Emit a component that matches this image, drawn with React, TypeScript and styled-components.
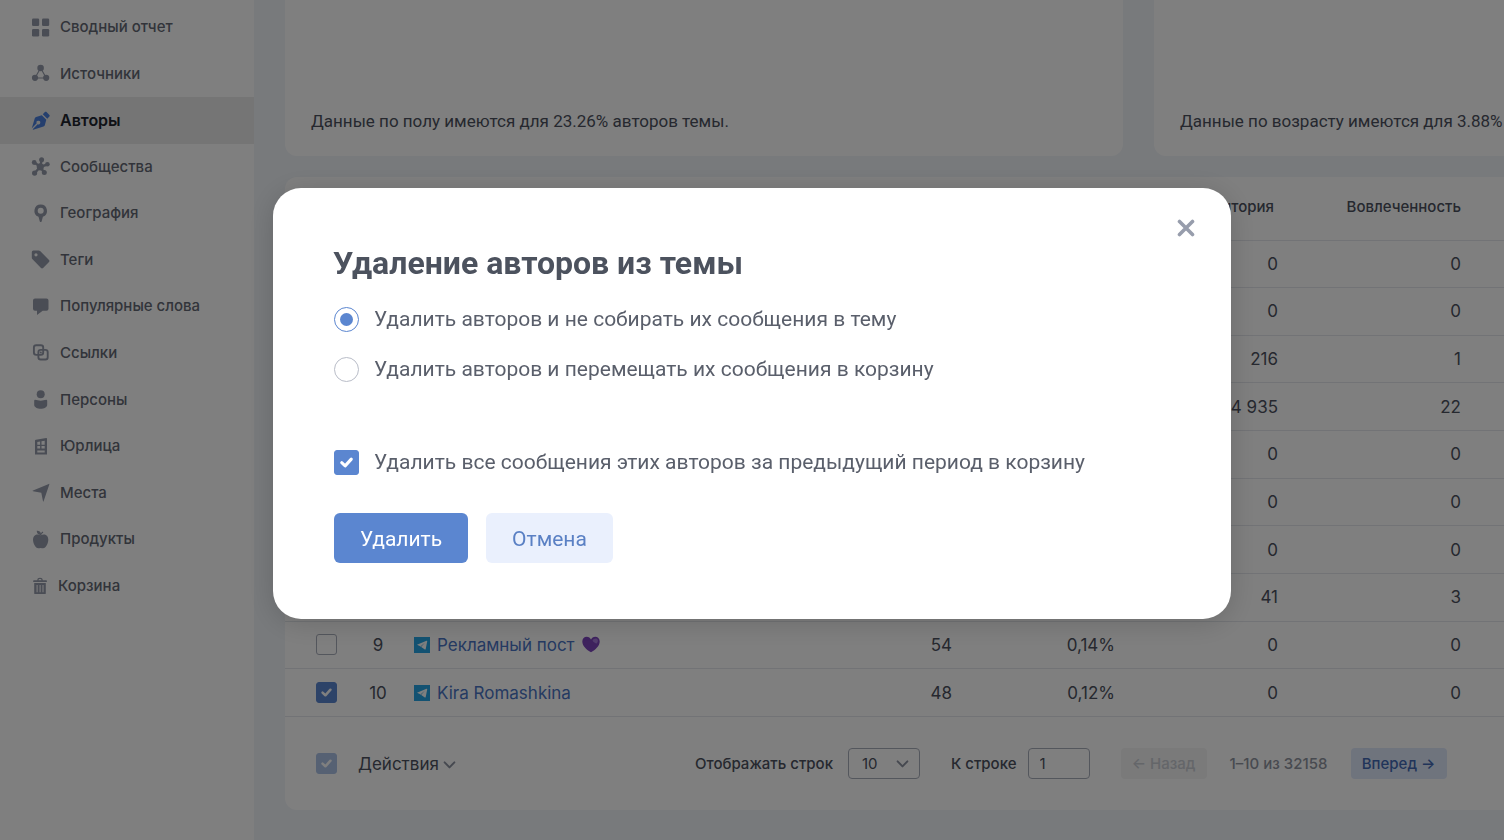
import React, { useState } from 'react';
import styled, { createGlobalStyle, css } from 'styled-components';

const GlobalStyle = createGlobalStyle`
  *, *::before, *::after { box-sizing: border-box; }
  body {
    margin: 0;
    height: 100vh;
    overflow: hidden;
    background: #f1f4f9;
    color: #4c515e;
    font-family: Inter, "Noto Sans", sans-serif;
    font-size: 17px;
    line-height: 24px;
  }
  button, input, select { font: inherit; color: inherit; }
`;

const Page = styled.div`
  display: flex;
  height: 100vh;
  overflow: hidden;
`;

/* ---------- sidebar ---------- */

const Sidebar = styled.aside`
  flex: 0 0 254px;
  padding-top: 4px;
  background: #fff;
`;

const Menu = styled.nav`
  display: flex;
  flex-direction: column;
  height: 605px;
`;

const MenuLink = styled.a<{ $active?: boolean; $tight?: boolean }>`
  flex: 1;
  display: flex;
  align-items: center;
  gap: ${p => (p.$tight ? 8 : 10)}px;
  padding-left: 31px;
  color: ${p => (p.$active ? '#20242e' : '#646975')};
  background: ${p => (p.$active ? '#eaeaea' : 'transparent')};
  font-size: ${p => (p.$active ? 16 : 15)}px;
  font-weight: ${p => (p.$active ? 600 : 500)};
  text-decoration: none;

  svg {
    flex: none;
    width: 19px;
    height: 19px;
    color: ${p => (p.$active ? '#4a7fdc' : '#959baa')};
  }
`;

/* ---------- content ---------- */

const Content = styled.main`
  flex: 1;
  min-width: 0;
  overflow: hidden;
  padding-left: 31px;
`;

const Board = styled.div`
  display: grid;
  grid-template-columns: repeat(2, minmax(838px, 1fr));
  column-gap: 31px;
  row-gap: 21px;
`;

const ChartCard = styled.section`
  display: flex;
  align-items: flex-end;
  height: 156px;
  padding: 0 26px 23px;
  background: #fff;
  border-radius: 0 0 12px 12px;
  font-family: Roboto, "Noto Sans", sans-serif;
  white-space: nowrap;

  p { margin: 0; }
`;

const TableCard = styled.section`
  grid-column: 1 / -1;
  background: #fff;
  border-radius: 12px;
`;

const Table = styled.table`
  width: 100%;
  height: 540px;
  table-layout: fixed;
  border-collapse: collapse;

  thead tr { height: 63px; }
  tr { border-bottom: 1px solid #e4e7ec; }
`;

const Col = styled.col<{ $width?: number }>`
  width: ${p => (p.$width ? `${p.$width}px` : 'auto')};
`;

const HeadCell = styled.th<{ $inset?: number }>`
  padding: 0 ${p => p.$inset ?? 0}px 3px 0;
  font-size: 15px;
  font-weight: 500;
  text-align: right;
`;

const Cell = styled.td<{ $align?: 'left' | 'center' | 'right' }>`
  padding: 0;
  text-align: ${p => p.$align ?? 'right'};
`;

const CheckCell = styled(Cell)`
  padding-left: 31px;
`;

const AuthorLink = styled.a`
  display: inline-flex;
  align-items: center;
  gap: 7px;
  color: #4a74c4;
  text-decoration: none;
  white-space: nowrap;
`;

const tick = `url("data:image/svg+xml,%3Csvg xmlns='http://www.w3.org/2000/svg' viewBox='0 0 24 24'%3E%3Cpath d='M7 12.2l3.6 3.3 6.4-7' fill='none' stroke='white' stroke-width='3.2' stroke-linecap='round' stroke-linejoin='round'/%3E%3C/svg%3E")`;

const Checkbox = styled.input.attrs({ type: 'checkbox' })<{ $size?: number }>`
  appearance: none;
  display: block;
  flex: none;
  width: ${p => p.$size ?? 21}px;
  height: ${p => p.$size ?? 21}px;
  margin: 0;
  background: #fff;
  border: 1px solid #a9aebb;
  border-radius: 3px;

  &:checked {
    background: #5b86d0 ${tick} center / 100% no-repeat;
    border-color: #5b86d0;
  }
  &:disabled { opacity: 0.5; }
`;

const Footer = styled.footer`
  display: flex;
  align-items: center;
  height: 93px;
  padding-left: 31px;
  font-size: 15px;
  font-weight: 500;
`;

const ActionsButton = styled.button`
  display: flex;
  align-items: center;
  gap: 4px;
  width: 337px;
  margin-left: 21px;
  padding: 0;
  background: none;
  border: 0;
  font-size: 17px;
  font-weight: 400;

  svg { color: #8c92a0; margin-top: 3px; }
`;

const field = css`
  height: 31px;
  background: #fff;
  border: 1px solid #a9aebb;
  border-radius: 4px;
  font-weight: 400;
`;

const Field = styled.label<{ $gap: number }>`
  display: flex;
  align-items: center;
  gap: ${p => p.$gap}px;
  margin-right: 31px;
  white-space: nowrap;
`;

const SelectBox = styled.span`
  display: grid;
  align-items: center;

  > * { grid-area: 1 / 1; }
  svg { justify-self: end; margin-right: 11px; color: #8c92a0; pointer-events: none; }
`;

const RowSelect = styled.select`
  ${field}
  appearance: none;
  width: 72px;
  padding: 0 13px;
`;

const RowInput = styled.input`
  ${field}
  width: 62px;
  padding: 0 11px;
`;

const PageButton = styled.button<{ $width: number }>`
  width: ${p => p.$width}px;
  height: 31px;
  padding: 0;
  border: 0;
  border-radius: 4px;
  background: #dfe8fb;
  color: #4269b4;
  white-space: nowrap;

  &:disabled { background: #f4f4f5; color: #c9ccd3; }
`;

const Range = styled.span`
  width: 144px;
  color: #9095a1;
  text-align: center;
`;

/* ---------- dialog ---------- */

const Overlay = styled.div`
  position: fixed;
  inset: 0;
  display: flex;
  align-items: center;
  justify-content: center;
  padding-bottom: 33px;
  background: rgba(0, 0, 0, 0.5);
`;

const Dialog = styled.form`
  position: relative;
  width: 958px;
  max-width: 100%;
  padding: 50px 60px 56px;
  background: #fff;
  border-radius: 28px;
  box-shadow: 0 4px 28px rgba(0, 0, 0, 0.16);
  color: #5a5f6b;
  font-family: Roboto, "Noto Sans", sans-serif;
  font-size: 21px;
  line-height: 26px;
`;

const CloseButton = styled.button`
  position: absolute;
  top: 28px;
  right: 33px;
  display: grid;
  place-items: center;
  width: 24px;
  height: 24px;
  padding: 0;
  background: none;
  border: 0;
  color: #979dac;
`;

const Title = styled.h2`
  margin: 0 0 18px;
  color: #4c525e;
  font-size: 32px;
  font-weight: 700;
  line-height: 50px;
`;

const Options = styled.div`
  display: flex;
  flex-direction: column;
  gap: 24px;
  margin-bottom: 67px;
`;

const Option = styled.label`
  display: flex;
  align-items: center;
  gap: 15px;
  padding-left: 1px;
  white-space: nowrap;
`;

const Radio = styled.input.attrs({ type: 'radio' })`
  appearance: none;
  display: grid;
  place-items: center;
  flex: none;
  width: 25px;
  height: 25px;
  margin: 0;
  border: 1px solid #b9bdc8;
  border-radius: 50%;

  &:checked { border-color: #5b86d0; }
  &:checked::before {
    content: '';
    width: 13px;
    height: 13px;
    border-radius: 50%;
    background: #5b86d0;
  }
`;

const Buttons = styled.div`
  display: flex;
  gap: 18px;
  margin-top: 38px;
  padding-left: 1px;
`;

const DialogButton = styled.button<{ $primary?: boolean }>`
  height: 50px;
  width: ${p => (p.$primary ? 134 : 127)}px;
  padding: 2px 0 0;
  border: 0;
  border-radius: 6px;
  background: ${p => (p.$primary ? '#5b86d0' : '#eaf0fd')};
  color: ${p => (p.$primary ? '#fff' : '#5a80c4')};
`;

/* ---------- icons ---------- */

const Svg = ({ children }: { children: React.ReactNode }) => (
  <svg viewBox="0 0 19 19" fill="currentColor" aria-hidden="true">{children}</svg>
);

const icons: Record<string, React.ReactNode> = {
  grid: (
    <Svg>
      <rect x="1" y="0.5" width="7.2" height="7.6" rx="1.3" /><rect x="11" y="0.5" width="7.2" height="7.6" rx="1.3" />
      <rect x="1" y="11" width="7.2" height="7.6" rx="1.3" /><rect x="11" y="11" width="7.2" height="7.6" rx="1.3" />
    </Svg>
  ),
  sources: (
    <Svg>
      <path d="M9.6 4L4 14h11.2z" fill="none" stroke="currentColor" strokeWidth="1.1" />
      <circle cx="9.6" cy="4" r="3.3" /><circle cx="4" cy="13.8" r="3.1" /><circle cx="15.2" cy="13.8" r="3.1" />
    </Svg>
  ),
  pen: (
    <Svg>
      <path d="M11.8 3.200l2.100-2.100c.5-.5 1.100-.5 1.600 0l2.900 2.900c.5.5.5 1.100 0 1.600l-2.100 2.100z" />
      <path fillRule="evenodd" d="M10.800 4.200l4.500 4.500-1.500 5.600c-.2.700-.600 1.100-1.300 1.300L2.200 18.800l-.500-.500 5-5a1.900 1.900 0 1 0-1-1l-4.900 4.900L3.800 7.200c.2-.700.600-1.100 1.300-1.300z" />
    </Svg>
  ),
  hub: (
    <Svg>
      <g fill="none" stroke="currentColor" strokeWidth="2.400">
        <path d="M9.300 9.800L10.600 3M9.300 9.800l7-2.300M9.300 9.800l3.800 5.700M9.300 9.800l-5.300 6M9.300 9.800L3.300 5.600" />
      </g>
      <circle cx="9.300" cy="9.800" r="3.600" />
      <circle cx="10.600" cy="2.700" r="2.500" /><circle cx="16.400" cy="7.300" r="2.300" /><circle cx="13.300" cy="15.600" r="2.500" />
      <circle cx="3.600" cy="16.100" r="2.600" /><circle cx="3.200" cy="5.500" r="2.400" />
    </Svg>
  ),
  pin: (
    <Svg>
      <path fillRule="evenodd" d="M9.700.500a6.300 6.300 0 0 0-2.200 12.200l1.300 4.700c.3.900 1.500.900 1.800 0l1.300-4.700A6.300 6.300 0 0 0 9.700.500zm0 3.300a3 3 0 1 1 0 6 3 3 0 0 1 0-6z" />
    </Svg>
  ),
  tag: (
    <Svg>
      <path fillRule="evenodd" d="M2.300.500h5.400c.5 0 1 .2 1.400.500l8.900 8.900c.600.600.600 1.500 0 2.100l-5.900 6c-.600.600-1.500.600-2.100 0L1.300 9.100A2 2 0 0 1 .800 7.700V2A1.500 1.500 0 0 1 2.300.500zM5 3.200a1.600 1.600 0 1 0 0 3.200 1.600 1.600 0 0 0 0-3.200z" />
    </Svg>
  ),
  bubble: (
    <Svg>
      <path d="M4 1.500h11.500a2 2 0 0 1 2 2v8.300a2 2 0 0 1-2 2h-3.800L6 18v-4.200H4a2 2 0 0 1-2-2V3.500a2 2 0 0 1 2-2z" />
    </Svg>
  ),
  links: (
    <Svg>
      <g fill="none" stroke="currentColor" strokeWidth="1.900">
        <rect x="2.900" y="2.300" width="9.300" height="9.600" rx="2.300" />
        <rect x="7.400" y="6.900" width="9.300" height="9.600" rx="2.300" />
      </g>
      <circle cx="9.800" cy="9.400" r="1" />
    </Svg>
  ),
  person: (
    <Svg>
      <circle cx="9.700" cy="4.200" r="4" />
      <path d="M4 9.800c2 0 3.500.900 5.700.900s3.700-.900 5.700-.900c.400 0 .8.300.8.900v4c0 2.500-3.100 4-6.500 4s-6.500-1.500-6.500-4v-4c0-.6.400-.9.800-.9z" />
    </Svg>
  ),
  building: (
    <Svg>
      <path fillRule="evenodd" d="M4 3.700c0-.6.300-.9.900-1L15.200 1c.5-.1.800.2.800.7v15.900h-12zM6.300 5v2.700h2.800V4.500zm4.200-.7v3.400h3.200V3.800zM6.300 9v2.600h2.800V9zm4.200 0v2.600h3.200V9zM6.300 13.400v2h7.400v-2z" />
    </Svg>
  ),
  arrow: (
    <Svg><path d="M17.800.900c.5-.2.700 0 .5.500L12.600 18.300c-.2.500-.5.500-.6 0l-1.700-8.600L2 8.200c-.6-.1-.6-.400 0-.6z" /></Svg>
  ),
  apple: (
    <Svg>
      <path d="M9.700 5.200c1.400-.8 2.800-1 4.200-.600 2 .600 3.400 2.400 3.400 5 0 4-2.400 8.700-5.200 8.700-.9 0-1.500-.4-2.400-.4s-1.500.4-2.400.4C4.500 18.300 2 13.600 2 9.600c0-2.600 1.500-4.400 3.500-5 1.400-.4 2.800-.2 4.200.6z" />
      <path d="M5.700.800c2.200-.3 3.700.5 4.200 2.700.4-1 1-1.600 1.900-1.900l.5 1.200c-1.300.5-1.800 1.300-1.900 2.300H9.300C7.100 4.600 5.900 3.300 5.700.800z" />
    </Svg>
  ),
  trash: (
    <Svg>
      <path d="M3 4.200h3.300c0-1.600 1-2.400 2.700-2.400s2.700.8 2.700 2.400H15c.7 0 .9.500.9 1v.8H2.200v-.8c0-.5.200-1 .8-1zm4.500 0h3c0-.8-.5-1.200-1.500-1.200s-1.500.4-1.500 1.200z" fillRule="evenodd" />
      <path fillRule="evenodd" d="M3.200 7h11.600v10.200c0 .600-.3.900-.8.900H4c-.5 0-.8-.3-.8-.900zM5.600 9v7.300h1V9zm3 0v7.300h1V9zm2.900 0v7.300h1V9z" />
    </Svg>
  ),
};

const Telegram = () => (
  <svg width="16" height="16" viewBox="0 0 16 16" aria-hidden="true">
    <rect width="16" height="16" fill="#26a5e4" />
    <path d="M3 7.800l9.500-4c.5-.2.800 0 .7.600l-1.500 7.600c-.1.500-.5.600-.9.400L6.200 9.300z" fill="#fff" />
    <path d="M6.200 9.200l4.600-3.400-3.500 4.400z" fill="#9ccdea" />
  </svg>
);

const Chevron = () => (
  <svg width="13" height="8" viewBox="0 0 14 9" aria-hidden="true">
    <path d="M1.500 1.500L7 7.200l5.500-5.700" fill="none" stroke="currentColor" strokeWidth="2.200" strokeLinecap="round" strokeLinejoin="round" />
  </svg>
);

const Heart = () => (
  <svg width="18" height="17" viewBox="0 0 18 17" aria-hidden="true">
    <path d="M9 16.300C4.500 13.600.3 9.700.3 5.400.3 2.600 2.300.700 4.700.700 6.700.700 8.300 1.800 9 3.500 9.700 1.800 11.300.700 13.300.700c2.400 0 4.400 1.900 4.400 4.700 0 4.300-4.200 8.200-8.700 10.900z" fill="#7d45bd" />
    <path d="M10.500 4.500c.8-1.800 3-2.700 4.500-1.700 1.300 1 1.100 3.400-.3 4.800-1.400-.3-3.300-1.300-4.200-3.100z" fill="#a77bdc" />
  </svg>
);

/* ---------- data ---------- */

const menu = [
  ['grid', 'Сводный отчет'], ['sources', 'Источники'], ['pen', 'Авторы'], ['hub', 'Сообщества'],
  ['pin', 'География'], ['tag', 'Теги'], ['bubble', 'Популярные слова'], ['links', 'Ссылки'],
  ['person', 'Персоны'], ['building', 'Юрлица'], ['arrow', 'Места'], ['apple', 'Продукты'], ['trash', 'Корзина'],
];

type Row = { rank?: number; name?: string; heart?: boolean; count?: string; share?: string; audience: string; engagement: string };

const rows: Row[] = [
  { audience: '0', engagement: '0' },
  { audience: '0', engagement: '0' },
  { audience: '216', engagement: '1' },
  { audience: '4 935', engagement: '22' },
  { audience: '0', engagement: '0' },
  { audience: '0', engagement: '0' },
  { audience: '0', engagement: '0' },
  { audience: '41', engagement: '3' },
  { rank: 9, name: 'Рекламный пост', heart: true, count: '54', share: '0,14%', audience: '0', engagement: '0' },
  { rank: 10, name: 'Kira Romashkina', count: '48', share: '0,12%', audience: '0', engagement: '0' },
];

export default function App() {
  const [mode, setMode] = useState('skip');

  return (
    <>
      <GlobalStyle />
      <Page>
        <Sidebar>
          <Menu>
            {menu.map(([icon, label]) => (
              <MenuLink key={icon} href="#" $active={icon === 'pen'} $tight={icon === 'trash'}>
                {icons[icon]}
                {label}
              </MenuLink>
            ))}
          </Menu>
        </Sidebar>

        <Content>
          <Board>
            <ChartCard><p>Данные по полу имеются для 23.26% авторов темы.</p></ChartCard>
            <ChartCard><p>Данные по возрасту имеются для 3.88% авторов темы.</p></ChartCard>

            <TableCard>
              <Table>
                <colgroup>
                  <Col $width={73} /><Col $width={40} /><Col $width={16} /><Col $width={538} />
                  <Col $width={163} /><Col $width={163} /><Col $width={183} /><Col />
                </colgroup>
                <thead>
                  <tr>
                    <HeadCell colSpan={5} />
                    <HeadCell $inset={4}>Аудитория</HeadCell>
                    <HeadCell>Вовлеченность</HeadCell>
                    <HeadCell />
                  </tr>
                </thead>
                <tbody>
                  {rows.map((row, i) => (
                    <tr key={i}>
                      <CheckCell><Checkbox defaultChecked={i === 9} aria-label={`Выбрать автора ${i + 1}`} /></CheckCell>
                      <Cell $align="center">{row.rank}</Cell>
                      <Cell />
                      <Cell $align="left">
                        <Author row={row} />
                      </Cell>
                      <Cell>{row.share}</Cell>
                      <Cell>{row.audience}</Cell>
                      <Cell>{row.engagement}</Cell>
                      <Cell />
                    </tr>
                  ))}
                </tbody>
              </Table>

              <Footer>
                <Checkbox defaultChecked disabled aria-label="Выбрать всех" />
                <ActionsButton type="button">Действия <Chevron /></ActionsButton>
                <Field $gap={15}>
                  Отображать строк
                  <SelectBox>
                    <RowSelect defaultValue="10"><option>10</option><option>50</option></RowSelect>
                    <Chevron />
                  </SelectBox>
                </Field>
                <Field $gap={11}>К строке<RowInput defaultValue="1" /></Field>
                <PageButton type="button" $width={86} disabled>← Назад</PageButton>
                <Range>1–10 из 32158</Range>
                <PageButton type="button" $width={96}>Вперед →</PageButton>
              </Footer>
            </TableCard>
          </Board>
        </Content>
      </Page>

      <Overlay>
        <Dialog role="dialog" aria-modal="true" aria-labelledby="dialog-title" onSubmit={e => e.preventDefault()}>
          <CloseButton type="button" aria-label="Закрыть">
            <svg width="18" height="18" viewBox="0 0 18 18" aria-hidden="true">
              <path d="M2.500 2.500l13 13M15.500 2.500l-13 13" stroke="currentColor" strokeWidth="3.600" strokeLinecap="round" />
            </svg>
          </CloseButton>
          <Title id="dialog-title">Удаление авторов из темы</Title>
          <Options>
            <Option>
              <Radio name="mode" checked={mode === 'skip'} onChange={() => setMode('skip')} />
              Удалить авторов и не собирать их сообщения в тему
            </Option>
            <Option>
              <Radio name="mode" checked={mode === 'move'} onChange={() => setMode('move')} />
              Удалить авторов и перемещать их сообщения в корзину
            </Option>
          </Options>
          <Option>
            <Checkbox $size={25} defaultChecked />
            Удалить все сообщения этих авторов за предыдущий период в корзину
          </Option>
          <Buttons>
            <DialogButton $primary type="submit">Удалить</DialogButton>
            <DialogButton type="button">Отмена</DialogButton>
          </Buttons>
        </Dialog>
      </Overlay>
    </>
  );
}

const NameLine = styled.div`
  display: flex;
  justify-content: space-between;
`;

function Author({ row }: { row: Row }) {
  if (!row.name) return null;
  return (
    <NameLine>
      <AuthorLink href="#">
        <Telegram />
        {row.name}
        {row.heart && <Heart />}
      </AuthorLink>
      <span>{row.count}</span>
    </NameLine>
  );
}
